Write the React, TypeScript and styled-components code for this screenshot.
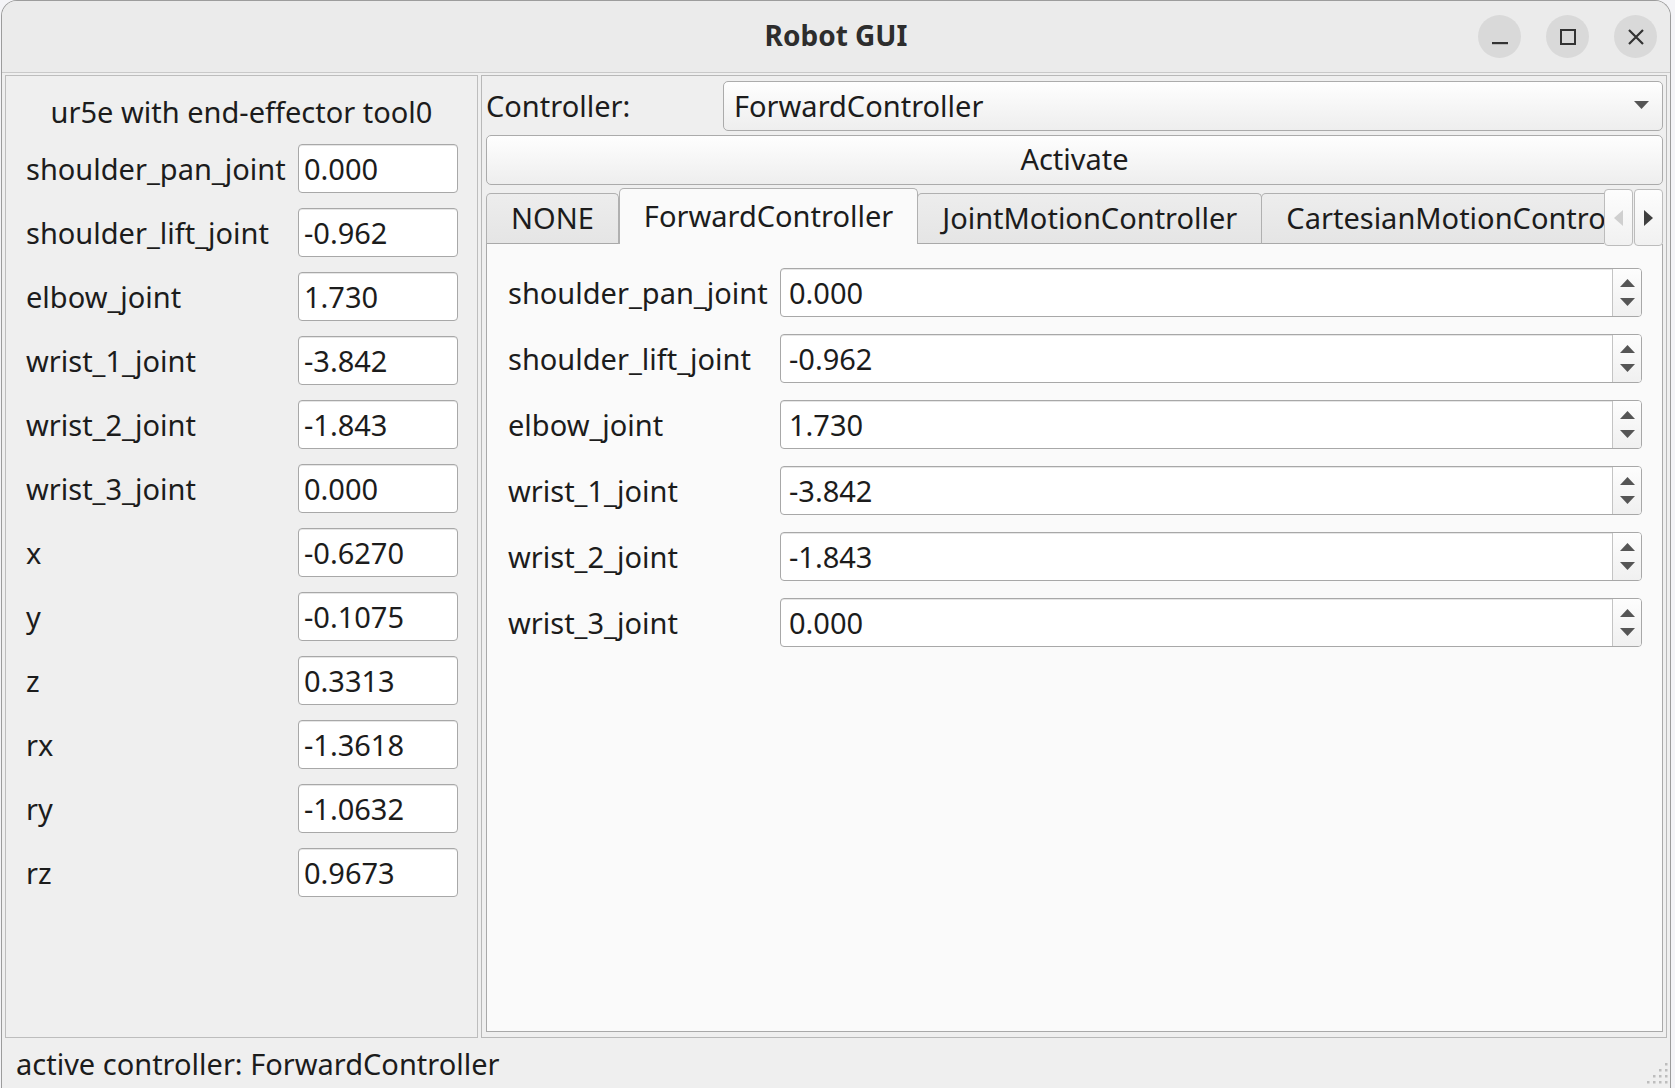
import React from 'react'
import styled, { createGlobalStyle } from 'styled-components'

const GlobalStyle = createGlobalStyle`
    html, body {
        margin: 0;
        padding: 0;
        background: #f4f4f7;
    }
    body {
        font-family: "Noto Sans", "Open Sans", sans-serif;
        font-size: 29px;
        color: #1c1c1c;
    }
`

const Root = styled.div`
    width: 1675px;
    height: 1088px;
    display: flex;
    overflow: hidden;
`

const Window = styled.div`
    margin-left: 1px;
    width: 1670px;
    height: 1088px;
    box-sizing: border-box;
    display: flex;
    flex-direction: column;
    background: #efefef;
    border: 1px solid #9c9c9c;
    border-bottom: none;
    border-radius: 16px 16px 0 0;
    overflow: hidden;
`

const TitleBar = styled.div`
    height: 71px;
    flex-shrink: 0;
    display: grid;
    grid-template-columns: 1fr auto 1fr;
    align-items: center;
    background: #ebebeb;
    border-bottom: 1px solid #c9c9c9;
`

const Title = styled.div`
    grid-column: 2;
    font-size: 28px;
    font-weight: 700;
    color: #2d2d2d;
    padding-bottom: 3px;
`

const WindowButtons = styled.div`
    justify-self: end;
    display: flex;
    gap: 25px;
    padding-right: 13px;
`

const CircleButton = styled.div`
    width: 43px;
    height: 43px;
    border-radius: 50%;
    background: #d9d9d9;
    display: flex;
    align-items: center;
    justify-content: center;
`

const Body = styled.div`
    flex: 1;
    display: flex;
    gap: 3px;
    padding: 2px 3px 0 3px;
    min-height: 0;
`

const LeftFrame = styled.div`
    width: 473px;
    flex-shrink: 0;
    box-sizing: border-box;
    border: 1px solid #bdbdbd;
    padding-top: 17px;
    display: flex;
    flex-direction: column;
`

const RobotTitle = styled.div`
    line-height: 38px;
    text-align: center;
    margin-bottom: 13px;
`

const Form = styled.div`
    display: grid;
    grid-template-columns: 272px 160px;
    row-gap: 15px;
    align-items: center;
    padding-left: 20px;
`

const Label = styled.div`
    line-height: 38px;
    white-space: nowrap;
`

const ValueInput = styled.input`
    height: 49px;
    width: 160px;
    box-sizing: border-box;
    border: 1px solid #a8a8a8;
    border-radius: 4px;
    background: #ffffff;
    box-shadow: inset 0 1px 0 #e6e6e6;
    padding: 0 0 0 5px;
    font: inherit;
    color: inherit;
    outline: none;
`

const RightFrame = styled.div`
    flex: 1;
    min-width: 0;
    box-sizing: border-box;
    border: 1px solid #b8b8b8;
    padding: 5px 3px 5px 4px;
    display: flex;
    flex-direction: column;
`

const ControllerRow = styled.div`
    display: grid;
    grid-template-columns: 237px 1fr;
    align-items: center;
    height: 50px;
`

const RaisedBox = styled.div`
    height: 50px;
    box-sizing: border-box;
    border: 1px solid #ababab;
    border-radius: 5px;
    background: linear-gradient(#fefefe, #eeeeee);
    display: flex;
    align-items: center;
`

const Combo = styled(RaisedBox)`
    justify-content: space-between;
    padding: 0 13px 2px 10px;
`

const ActivateButton = styled(RaisedBox)`
    margin-top: 4px;
    justify-content: center;
    padding-bottom: 3px;
`

const TabWidget = styled.div`
    margin-top: 3px;
    flex: 1;
    display: flex;
    flex-direction: column;
    min-height: 0;
`

const TabBar = styled.div`
    height: 56px;
    display: flex;
    flex-shrink: 0;
`

const TabStrip = styled.div`
    flex: 1;
    min-width: 0;
    display: flex;
    align-items: flex-end;
    overflow: hidden;
`

const Tab = styled.div<{ $active?: boolean }>`
    flex-shrink: 0;
    box-sizing: border-box;
    height: ${p => (p.$active ? '56px' : '51px')};
    padding: ${p => (p.$active ? '0 24px 3px' : '0 24px 2px')};
    display: flex;
    align-items: center;
    white-space: nowrap;
    border: 1px solid #b0b0b0;
    border-bottom: ${p => (p.$active ? 'none' : '1px solid #a9a9a9')};
    border-radius: 5px 5px 0 0;
    margin-left: ${p => (p.$active ? '0' : '-1px')};
    background: ${p => (p.$active ? '#fafafa' : 'linear-gradient(#ededed, #e5e5e5)')};
    position: relative;
    z-index: ${p => (p.$active ? 1 : 0)};

    &:first-child {
        margin-left: 0;
    }
`

const ScrollButtons = styled.div`
    display: flex;
    gap: 1px;
    margin-top: 1px;
    height: 57px;
    position: relative;
    z-index: 2;
`

const ScrollButton = styled.div`
    width: 29px;
    height: 57px;
    box-sizing: border-box;
    border: 1px solid #bcbcbc;
    border-radius: 4px;
    background: linear-gradient(#fdfdfd, #f1f1f1);
    display: flex;
    align-items: center;
    justify-content: center;
`

const Pane = styled.div`
    flex: 1;
    background: #fafafa;
    border: 1px solid #a9a9a9;
    border-top: none;
    padding: 24px 20px 0 21px;
`

const SpinForm = styled.div`
    display: grid;
    grid-template-columns: 272px 1fr;
    row-gap: 17px;
    align-items: center;
`

const SpinBox = styled.div`
    height: 49px;
    box-sizing: border-box;
    display: flex;
    border: 1px solid #a8a8a8;
    border-radius: 4px;
    background: #ffffff;
    box-shadow: inset 0 1px 0 #e6e6e6;
    overflow: hidden;
`

const SpinValue = styled.div`
    flex: 1;
    display: flex;
    align-items: center;
    padding-left: 8px;
`

const SpinButtons = styled.div`
    width: 28px;
    border-left: 1px solid #c4c4c4;
    background: linear-gradient(#fdfdfd, #f0f0f0);
    display: flex;
    flex-direction: column;
    align-items: center;
    justify-content: center;
    gap: 11px;
    padding-bottom: 1px;
`

const StatusBar = styled.div`
    height: 50px;
    flex-shrink: 0;
    display: flex;
    align-items: center;
    justify-content: space-between;
    padding-left: 14px;
`

const Grip = styled.svg`
    align-self: flex-end;
    margin: 0 2px 4px 0;
`

type TriangleDir = 'up' | 'down' | 'left' | 'right'

function Triangle({ dir, color = '#545454', w = 15, h = 8 }: { dir: TriangleDir; color?: string; w?: number; h?: number }) {
    const vertical = dir === 'up' || dir === 'down'
    const width = vertical ? w : h
    const height = vertical ? h : w
    const points = {
        up: `0,${h} ${w / 2},0 ${w},${h}`,
        down: `0,0 ${w},0 ${w / 2},${h}`,
        left: `${h},0 0,${w / 2} ${h},${w}`,
        right: `0,0 ${h},${w / 2} 0,${w}`,
    }[dir]
    return (
        <svg width={width} height={height} viewBox={`0 0 ${width} ${height}`}>
            <polygon points={points} fill={color} />
        </svg>
    )
}

const leftValues: [string, string][] = [
    ['shoulder_pan_joint', '0.000'],
    ['shoulder_lift_joint', '-0.962'],
    ['elbow_joint', '1.730'],
    ['wrist_1_joint', '-3.842'],
    ['wrist_2_joint', '-1.843'],
    ['wrist_3_joint', '0.000'],
    ['x', '-0.6270'],
    ['y', '-0.1075'],
    ['z', '0.3313'],
    ['rx', '-1.3618'],
    ['ry', '-1.0632'],
    ['rz', '0.9673'],
]

const tabs = ['NONE', 'ForwardController', 'JointMotionController', 'CartesianMotionController']

function App() {
    const joints = leftValues.slice(0, 6)

    return (
        <Root>
            <GlobalStyle />
            <Window>
                <TitleBar>
                    <Title>Robot GUI</Title>
                    <WindowButtons>
                        <CircleButton>
                            <svg width="16" height="16" viewBox="0 0 16 16">
                                <rect x="0" y="13" width="16" height="2.2" fill="#333" />
                            </svg>
                        </CircleButton>
                        <CircleButton>
                            <svg width="16" height="16" viewBox="0 0 16 16">
                                <rect x="1" y="1" width="14" height="14" fill="none" stroke="#333" strokeWidth="2" />
                            </svg>
                        </CircleButton>
                        <CircleButton>
                            <svg width="16" height="16" viewBox="0 0 16 16">
                                <path d="M1 1 L15 15 M15 1 L1 15" stroke="#333" strokeWidth="2.2" />
                            </svg>
                        </CircleButton>
                    </WindowButtons>
                </TitleBar>

                <Body>
                    <LeftFrame>
                        <RobotTitle>ur5e with end-effector tool0</RobotTitle>
                        <Form>
                            {leftValues.map(([name, value]) => (
                                <React.Fragment key={name}>
                                    <Label>{name}</Label>
                                    <ValueInput readOnly value={value} />
                                </React.Fragment>
                            ))}
                        </Form>
                    </LeftFrame>

                    <RightFrame>
                        <ControllerRow>
                            <Label>Controller:</Label>
                            <Combo>
                                <span>ForwardController</span>
                                <Triangle dir="down" color="#555" />
                            </Combo>
                        </ControllerRow>
                        <ActivateButton>Activate</ActivateButton>

                        <TabWidget>
                            <TabBar>
                                <TabStrip>
                                    {tabs.map(t => (
                                        <Tab key={t} $active={t === 'ForwardController'}>{t}</Tab>
                                    ))}
                                </TabStrip>
                                <ScrollButtons>
                                    <ScrollButton>
                                        <Triangle dir="left" color="#cfcfcf" w={16} h={9} />
                                    </ScrollButton>
                                    <ScrollButton>
                                        <Triangle dir="right" color="#3f3f3f" w={16} h={9} />
                                    </ScrollButton>
                                </ScrollButtons>
                            </TabBar>
                            <Pane>
                                <SpinForm>
                                    {joints.map(([name, value]) => (
                                        <React.Fragment key={name}>
                                            <Label>{name}</Label>
                                            <SpinBox>
                                                <SpinValue>{value}</SpinValue>
                                                <SpinButtons>
                                                    <Triangle dir="up" color="#555" />
                                                    <Triangle dir="down" color="#555" />
                                                </SpinButtons>
                                            </SpinBox>
                                        </React.Fragment>
                                    ))}
                                </SpinForm>
                            </Pane>
                        </TabWidget>
                    </RightFrame>
                </Body>

                <StatusBar>
                    <span>active controller: ForwardController</span>
                    <Grip width="22" height="22" viewBox="0 0 22 22">
                        {[[19, 1], [13, 7], [19, 7], [7, 13], [13, 13], [19, 13], [1, 19], [7, 19], [13, 19], [19, 19]].map(([x, y]) => (
                            <rect key={`${x}-${y}`} x={x} y={y} width="2.5" height="2.5" fill="#bdbdbd" />
                        ))}
                    </Grip>
                </StatusBar>
            </Window>
        </Root>
    )
}

export default App
